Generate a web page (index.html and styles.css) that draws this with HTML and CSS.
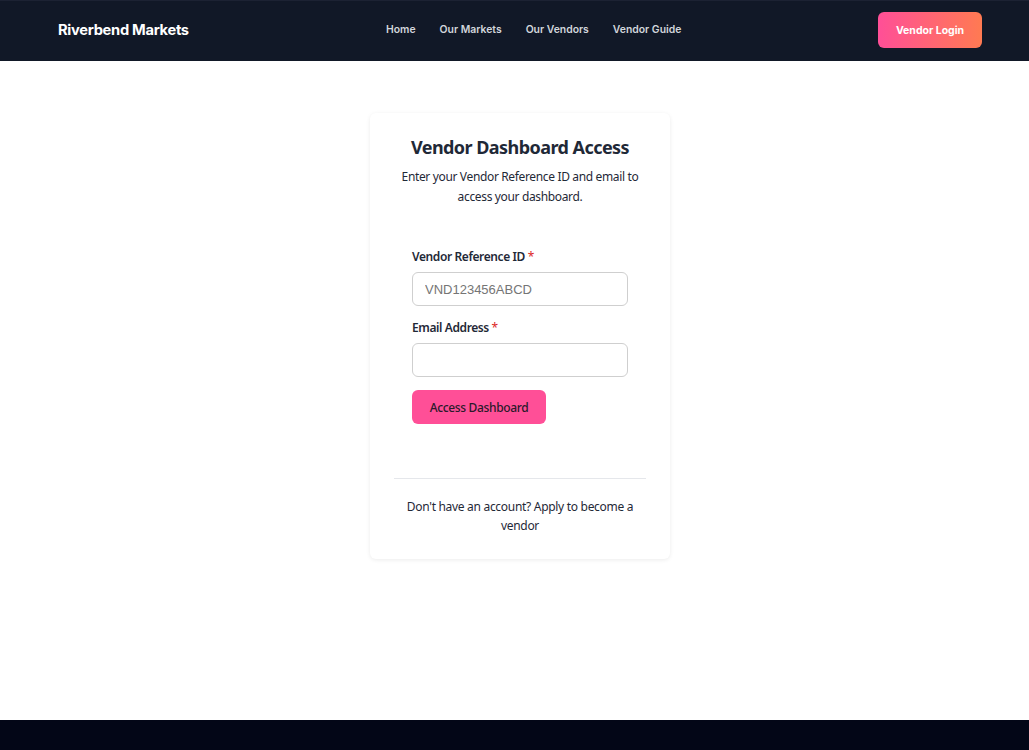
FILE: index.html
```html
<!DOCTYPE html>
<html lang="en">
<head>
<meta charset="utf-8">
<title>Vendor Dashboard Access - Riverbend Markets</title>
<link rel="stylesheet" href="styles.css">
</head>
<body>
<header class="topbar">
  <div class="brand">Riverbend Markets</div>
  <nav class="nav">
    <a href="#">Home</a>
    <a href="#">Our Markets</a>
    <a href="#">Our Vendors</a>
    <a href="#">Vendor Guide</a>
  </nav>
  <a class="login-btn" href="#">Vendor Login</a>
</header>
<main class="main">
  <section class="card">
    <h1 class="title">Vendor Dashboard Access</h1>
    <p class="subtitle">Enter your Vendor Reference ID and email to access your dashboard.</p>
    <form class="form">
      <label class="label">Vendor Reference ID <span class="req">*</span></label>
      <input class="input" type="text" placeholder="VND123456ABCD">
      <label class="label">Email Address <span class="req">*</span></label>
      <input class="input" type="email">
      <button class="submit" type="button">Access Dashboard</button>
    </form>
    <div class="divider"></div>
    <p class="apply">Don't have an account? Apply to become a vendor</p>
  </section>
</main>
<footer class="footer"></footer>
</body>
</html>
```
FILE: styles.css
```css
* { box-sizing: border-box; }
html, body { margin: 0; padding: 0; }
body {
  background: #ffffff;
  font-family: "Noto Sans", "Open Sans", sans-serif;
  color: #1f2937;
  min-height: 750px;
  display: flex;
  flex-direction: column;
}
.topbar {
  height: 61px;
  background: #111827;
  border-top: 1px solid #1c2233;
  display: flex;
  align-items: center;
  padding: 0 47px 3px 58px;
  font-family: Inter, "Liberation Sans", sans-serif;
}
.brand {
  color: #ffffff;
  font-weight: 700;
  font-size: 14.7px;
  letter-spacing: -0.3px;
  width: 328px;
}
.nav {
  display: flex;
  gap: 24px;
  flex: 1;
}
.nav a {
  color: #d1d5db;
  text-decoration: none;
  font-size: 10.4px;
  font-weight: 600;
}
.login-btn {
  width: 104px;
  height: 36px;
  border-radius: 6px;
  background: linear-gradient(90deg, #ff4f97, #ff7a52);
  color: #ffffff;
  font-size: 10.5px;
  font-weight: 700;
  text-decoration: none;
  display: flex;
  align-items: center;
  justify-content: center;
  margin-top: 1px;
}
.main {
  flex: 1;
  display: flex;
  justify-content: center;
  align-items: flex-start;
  padding: 52px 0 0 11px;
}
.card {
  width: 300px;
  background: #ffffff;
  border-radius: 6px;
  box-shadow: 0 1px 4px rgba(0,0,0,0.08);
  padding: 22px 24px 24px;
  text-align: center;
}
.title {
  margin: 0;
  font-size: 18px;
  font-weight: 700;
  letter-spacing: -0.55px;
  color: #1f2937;
  line-height: 24px;
}
.subtitle {
  margin: 8px 0 0;
  font-size: 12px;
  letter-spacing: -0.35px;
  line-height: 20px;
  color: #1f2937;
}
.form {
  display: flex;
  flex-direction: column;
  align-items: flex-start;
  padding: 41px 18px 0;
  text-align: left;
}
.label {
  font-size: 12px;
  font-weight: 600;
  letter-spacing: -0.4px;
  line-height: 18px;
  margin-bottom: 6px;
}
.req { color: #dc2626; font-weight: 400; }
.input {
  width: 216px;
  height: 34px;
  border: 1px solid #cfcfcf;
  border-radius: 6px;
  padding: 0 12px;
  font-family: "Liberation Sans", Arial, sans-serif;
  font-size: 13px;
  margin-bottom: 13px;
  background: #fff;
}
.input::placeholder { color: #757575; }
.submit {
  height: 34px;
  width: 134px;
  border: none;
  border-radius: 6px;
  background: #ff4f97;
  color: #2b1a2b;
  font-family: "Noto Sans", "Open Sans", sans-serif;
  font-size: 12px;
  letter-spacing: -0.35px;
  font-weight: 500;
  margin-top: 0;
}
.divider {
  border-top: 1px solid #e5e7eb;
  margin: 54px 0 0;
}
.apply {
  margin: 18px 0 0;
  font-size: 12px;
  letter-spacing: -0.3px;
  line-height: 19px;
  color: #1f2937;
}
.footer {
  height: 30px;
  background: #030617;
}
```
